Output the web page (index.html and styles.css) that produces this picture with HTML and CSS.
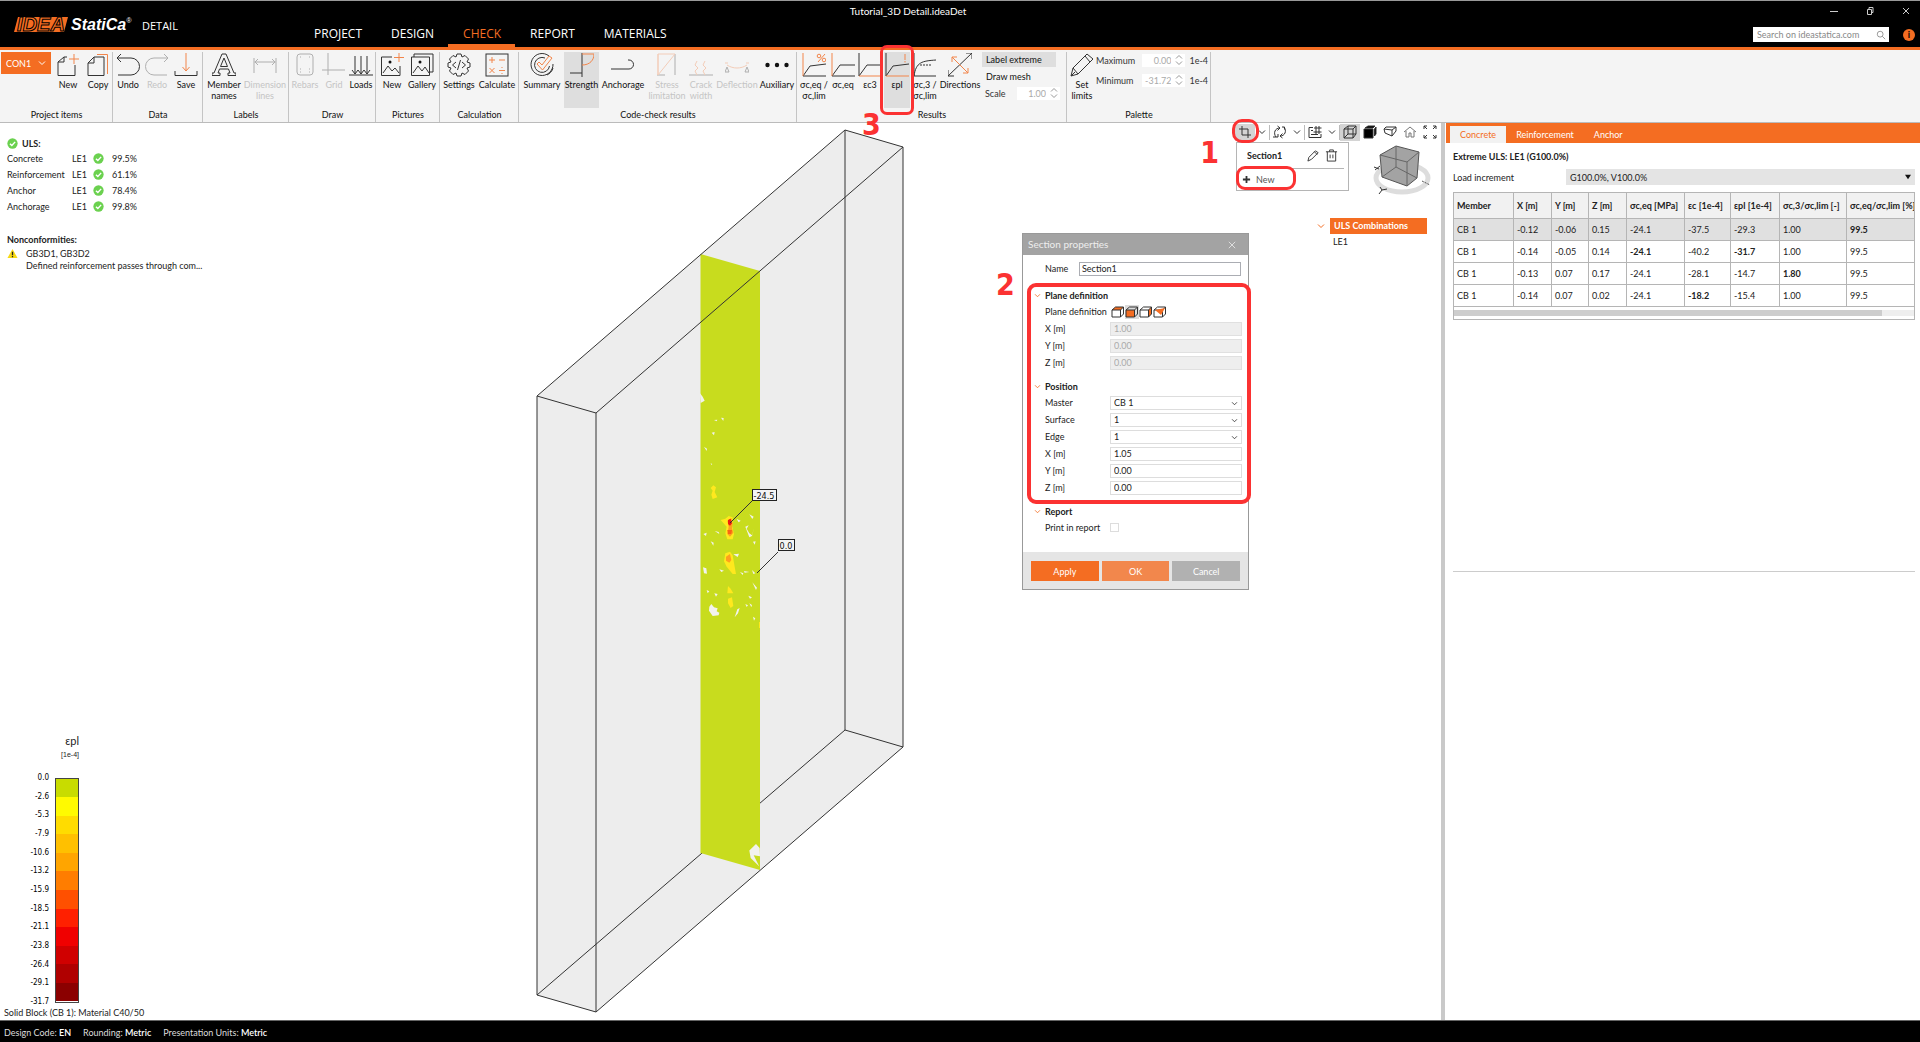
FILE: index.html
```html
<!DOCTYPE html>
<html lang="en">
<head>
<meta charset="utf-8">
<title>Tutorial_3D Detail.ideaDet</title>
<link rel="stylesheet" href="styles.css">
</head>
<body>
<svg class="defs" aria-hidden="true">
  <symbol id="chev" viewBox="0 0 8 6"><path d="M1 1.5 4 4.5 7 1.5"/></symbol>
  <symbol id="ok" viewBox="0 0 12 12"><circle cx="6" cy="6" r="5.6" fill="#6bd14f"/><path d="M3.2 6.2 5.3 8.2 8.9 4.2" fill="none" stroke="#fff" stroke-width="1.5"/></symbol>
  <symbol id="spin" viewBox="0 0 8 12"><path d="M1 4.5 4 1.5 7 4.5M1 7.5 4 10.5 7 7.5"/></symbol>
  <symbol id="boxlines" viewBox="0 0 14 12"><path d="M1 4 4.500 1H12.500L9.500 4ZM1 4V11H9.500V4M9.500 11 12.500 8V1"/></symbol>
</svg>

<header class="titlebar">
  <div class="brand">
    <span class="idea"><svg viewBox="0 0 56 17"><path d="M5 1H55L51 16H1Z"/></svg><b>IDEA</b></span>
    <span class="statica">StatiCa<sup>®</sup></span>
    <span class="product">DETAIL</span>
  </div>
  <nav class="menu">
    <a href="#project">PROJECT</a>
    <a href="#design">DESIGN</a>
    <a href="#check" class="on">CHECK</a>
    <a href="#report">REPORT</a>
    <a href="#materials">MATERIALS</a>
  </nav>
  <div class="doc">Tutorial_3D Detail.ideaDet</div>
  <div class="window">
    <div class="winbtns">
      <button aria-label="Minimize"><svg viewBox="0 0 10 10"><path d="M1 5.500H9"/></svg></button>
      <button aria-label="Restore"><svg viewBox="0 0 10 10"><path d="M2.500 3.500H6.500V8.500H2.500ZM4 3V1.500H8V6.500H7"/></svg></button>
      <button aria-label="Close"><svg viewBox="0 0 10 10"><path d="M2 2 8 8M8 2 2 8"/></svg></button>
    </div>
    <div class="searchrow">
      <label class="search"><input type="text" placeholder="Search on ideastatica.com" aria-label="Search"><svg viewBox="0 0 12 12"><circle cx="5" cy="5" r="3.500"/><path d="M7.500 7.500 11 11"/></svg></label>
      <button class="info" aria-label="Information">i</button>
    </div>
  </div>
</header>

<section class="ribbon">
  <div class="group g-project">
    <div class="tools">
      <button class="con">CON1 <svg viewBox="0 0 8 6"><use href="#chev"/></svg></button>
      <button class="tool w34"><svg viewBox="0 0 24 24"><path d="M8 4V9H2M8 4 2 9V22.500H19V12M8 4H11"/><path class="o" d="M18 1V11M13 6H23"/></svg>New</button>
      <button class="tool w26"><svg viewBox="0 0 24 24"><path d="M8 4H18V22.500H2V10L8 4V10H2"/><path class="o" d="M11 1.500H21.500V21"/></svg>Copy</button>
    </div>
    <h2>Project items</h2>
  </div>
  <div class="group g-data">
    <div class="tools">
      <button class="tool w28"><svg viewBox="0 0 24 24"><path d="M5 1 1 5 5 9M1 5H15A8.500 8.500 0 0 1 15 22H2"/></svg>Undo</button>
      <button class="tool w30" disabled><svg viewBox="0 0 24 24"><path d="M19 1 23 5 19 9M23 5H9A8.500 8.500 0 0 0 9 22H22"/></svg>Redo</button>
      <button class="tool w28"><svg viewBox="0 0 24 24"><path d="M1 18V22.500H23V18"/><path class="o" d="M12 0V18M8.500 14 12 18 15.500 14"/></svg>Save</button>
    </div>
    <h2>Data</h2>
  </div>
  <div class="group g-labels">
    <div class="tools">
      <button class="tool w40"><svg viewBox="0 0 24 24"><path d="M10 1H14L22 20H24V22.500H16V20H18L16.500 16H7.500L6 20H8V22.500H0V20H2ZM8.500 13.500H15.500L12 5Z"/></svg>Member names</button>
      <button class="tool w42" disabled><svg viewBox="0 0 24 24"><path d="M1 5V20M23 5V20M1.500 9H22.500M5 6 2 9 5 12M19 6 22 9 19 12"/></svg>Dimension lines</button>
    </div>
    <h2>Labels</h2>
  </div>
  <div class="group g-draw">
    <div class="tools">
      <button class="tool w30" disabled><svg viewBox="0 0 24 24"><rect x="4" y="1" width="16" height="21" rx="3"/><path d="M7 4H8M16 4H17M7 19H8M16 19H17M7 16H8M16 16H17"/></svg>Rebars</button>
      <button class="tool w28" disabled><svg viewBox="0 0 24 24"><path d="M6 0V22M0 17H23"/></svg>Grid</button>
      <button class="tool w26"><svg viewBox="0 0 24 24"><path d="M0 22H24M6 3V21M12 3V21M18 3V21M3 17 6 21 9 17M9 17 12 21 15 17M15 17 18 21 21 17"/></svg>Loads</button>
    </div>
    <h2>Draw</h2>
  </div>
  <div class="group g-pictures">
    <div class="tools">
      <button class="tool w30"><svg viewBox="0 0 24 24"><path d="M12 4H1.500V22.500H20V13M3 20 8 13 12 18 15 15 19 20"/><circle class="dot" cx="10" cy="9" r="1.500"/><path class="o" d="M19 0V9M14 4.500H24"/></svg>New</button>
      <button class="tool w30"><svg viewBox="0 0 24 24"><path d="M1.500 4H19.500V22.500H1.500ZM4 4V1H23V19H20M3 20 8 13 12 18 15 14 19 20"/><circle class="dot" cx="10" cy="9" r="1.500"/></svg>Gallery</button>
    </div>
    <h2>Pictures</h2>
  </div>
  <div class="group g-calc">
    <div class="tools">
      <button class="tool w36"><svg viewBox="0 0 24 24"><path d="M10 1H14L15 4 18 2.500 21.500 6 20 9 23 10V14L20 15 21.500 18 18 21.500 15 20 14 23H10L9 20 6 21.500 2.500 18 4 15 1 14V10L4 9 2.500 6 6 2.500 9 4ZM9 9 5.500 12 9 15M15 9 18.500 12 15 15M13.500 7 10.500 17"/></svg>Settings</button>
      <button class="tool w40"><svg viewBox="0 0 24 24"><rect x="1" y="1" width="22" height="22"/><path class="o" d="M4 7H10M7 4V10M14 7H20M4.500 15 9.500 20M9.500 15 4.500 20M14 17.500H20M17 14V15M17 20V21"/></svg>Calculate</button>
    </div>
    <h2>Calculation</h2>
  </div>
  <div class="group g-code">
    <div class="tools">
      <button class="tool w44"><svg viewBox="0 0 24 24"><path d="M19 3A11 11 0 1 0 23 11M15 5A7.500 7.500 0 1 0 19.500 13M23 15C22 19 19 21 17 22"/><path class="o" d="M7 11 9 9 12 12 19 3 22 5 12.500 17Z"/></svg>Summary</button>
      <button class="tool on w35"><svg viewBox="0 0 24 24"><path d="M12 0V24M0 20H12"/><path class="o" d="M12 1H24C24 7 20 12 12 12"/></svg>Strength</button>
      <button class="tool w48"><svg viewBox="0 0 24 24"><path d="M0 16H18A4 4 0 0 0 18 7H17"/></svg>Anchorage</button>
      <button class="tool w40" disabled><svg viewBox="0 0 24 24"><path d="M20 1V22M2 22H10"/><path class="o" d="M3 1H20L3 22ZM3 22V1"/></svg>Stress limitation</button>
      <button class="tool w28" disabled><svg viewBox="0 0 24 24"><path d="M0 22H24"/><path class="o" d="M8 22 6 18 9 15 6 12 8 8M16 22 14 18 17 15 14 12 16 8"/></svg>Crack width</button>
      <button class="tool w44" disabled><svg viewBox="0 0 24 24"><path d="M2 14 0 19H4ZM22 14 20 19H24Z"/><path class="o" d="M2 12C8 16 16 16 22 12M0 10H3M21 10H24"/></svg>Deflection</button>
      <button class="tool w36"><svg viewBox="0 0 24 24"><g class="dot"><circle cx="2.500" cy="12" r="2.200"/><circle cx="12" cy="12" r="2.200"/><circle cx="21.500" cy="12" r="2.200"/></g></svg>Auxiliary</button>
    </div>
    <h2>Code-check results</h2>
  </div>
  <div class="group g-results">
    <div class="tools">
      <button class="tool w32"><svg viewBox="0 0 24 24"><path d="M1 23 8 13 24 11M1 23H24"/><path class="o" d="M1 0V23M16 9 23 1"/><circle class="o" cx="17" cy="3" r="1.800"/><circle class="o" cx="22" cy="7" r="1.800"/></svg>σc,eq / σc,lim</button>
      <button class="tool w26"><svg viewBox="0 0 24 24"><path d="M1 23 9 12H24M1 23H24"/><path class="o" d="M1 0V23"/></svg>σc,eq</button>
      <button class="tool w28"><svg viewBox="0 0 24 24"><path d="M1 0V23L9 12H23"/><path class="o" d="M1 23H24"/></svg>εc3</button>
      <button class="tool on w26"><svg viewBox="0 0 24 24"><path d="M1 0V23L8 13 24 11"/><path class="o" d="M1 23H24M20 1V7M20 8V9.500"/></svg>εpl</button>
      <button class="tool w30"><svg viewBox="0 0 24 24"><path d="M1 0V23H23M1 23C3 9 9 8 23 7"/><path stroke-dasharray="2 1" d="M7 12H18"/></svg>σc,3 / σc,lim</button>
      <button class="tool w40"><svg viewBox="0 0 24 24"><path d="M0 23 24 0M18 0H24V6M0 17V23H6"/><path class="o" d="M4 4 20 20M4 9V4H9M20 15V20H15"/></svg>Directions</button>
      <div class="options">
        <button class="opt on">Label extreme</button>
        <button class="opt">Draw mesh</button>
        <label class="num">Scale <span><input type="text" value="1.00" disabled><svg viewBox="0 0 8 12"><use href="#spin"/></svg></span></label>
      </div>
    </div>
    <h2>Results</h2>
  </div>
  <div class="group g-palette">
    <div class="tools">
      <button class="tool w28"><svg viewBox="0 0 24 24"><path d="M1 23 3 15 17 1 23 6 8 21ZM3 15 8 21M15 3 20 9M1 23 5 19"/></svg>Set limits</button>
      <div class="limits">
        <label class="num">Maximum <span><input type="text" value="0.00" disabled><svg viewBox="0 0 8 12"><use href="#spin"/></svg></span><i>1e-4</i></label>
        <label class="num">Minimum <span><input type="text" value="-31.72" disabled><svg viewBox="0 0 8 12"><use href="#spin"/></svg></span><i>1e-4</i></label>
      </div>
    </div>
    <h2>Palette</h2>
  </div>
  <div class="mark mark-epl"></div>
  <div class="step step3">3</div>
</section>

<main class="work">
  <section class="canvas">
    <svg class="model" viewBox="535 123 372 897">
      <path fill="#ededed" d="M537 396 845 130 903 147V747L596 1012 537 995Z"/>
      <g class="edge">
        <path d="M537 995 845 730 903 747M845 730V130"/>
      </g>
      <path fill="#c8dc1e" d="M700.500 254 760 271V870L700.500 853Z"/>
      <g transform="translate(680 370) scale(.3333)">
        <g fill="#f2f2ee">
          <path d="M60 70 68 80 74 92 62 99ZM102 150 112 149 110 154ZM123 143 131 144 130 153ZM95 188 104 186 102 196ZM72 230 81 236 80 243ZM92 280 97 282 94 285ZM170 447 182 452 176 457ZM208 433 221 440 217 447ZM196 470 206 466 200 476 208 490 216 496 222 474 216 498 208 502ZM104 483 116 486 118 492ZM70 492 80 488 78 498ZM92 514 101 518 100 527ZM219 515 227 514 224 524ZM160 553 177 551 173 561ZM69 592 79 595 81 611 72 610ZM118 598 132 602 124 606ZM180 606 190 610 188 615ZM192 603 208 606 194 608ZM216 600 226 610 220 612ZM217 637 231 653 228 660ZM80 660 88 664 83 670ZM103 670 113 672 108 680ZM205 677 216 682 210 686ZM88 710 94 702 102 712 113 715 110 724 118 728 116 736 98 738 87 722ZM196 702 204 706 200 711ZM208 700 216 705 214 712ZM172 718 179 714 174 730 164 742ZM219 740 226 745 222 752Z"/>
          <path d="M208 1442 228 1422 239 1434 240 1459 221 1456 238 1490 212 1464Z"/>
        </g>
        <g fill="#ffe81e">
          <path d="M92 354 100 346 108 352 104 366 112 382 98 387 94 374 98 362ZM122 450 136 446 146 438 158 442 157 470 162 492 158 508 142 508 136 490 140 470ZM136 550 150 545 158 556 164 590 168 612 158 612 140 590 132 574ZM144 648 152 656 160 670 142 670ZM144 686 156 682 160 708 152 714 144 700Z"/>
        </g>
        <path fill="#ffa01e" d="M142 452 154 444 158 462 156 474 160 488 150 500 142 492 146 470ZM138 560 150 552 154 570 148 578 138 572Z"/>
        <path fill="#ee1c10" d="M144 450 152 446 156 460 150 467 144 462Z"/>
        <path fill="#f96414" d="M142 480 156 480 154 492 144 492Z"/>
        <path fill="#ffe81e" d="M237 756H240V774H237Z"/>
      </g>
      <g class="edge">
        <path d="M537 396 845 130 903 147 596 413ZM537 396V995L596 1012V413M596 1012 903 747V147"/>
        <path d="M730 523 752 501M757 573 778 552"/>
      </g>
      <g class="tag">
        <rect x="752.500" y="489.500" width="24" height="11"/><text x="764" y="499">-24.5</text>
        <rect x="778.500" y="539.500" width="16" height="11"/><text x="786" y="549">0.0</text>
      </g>
    </svg>

    <div class="left">
      <table class="uls">
        <caption><svg viewBox="0 0 12 12"><use href="#ok"/></svg>ULS:</caption>
        <tr><td>Concrete</td><td>LE1</td><td><svg viewBox="0 0 12 12"><use href="#ok"/></svg></td><td>99.5%</td></tr>
        <tr><td>Reinforcement</td><td>LE1</td><td><svg viewBox="0 0 12 12"><use href="#ok"/></svg></td><td>61.1%</td></tr>
        <tr><td>Anchor</td><td>LE1</td><td><svg viewBox="0 0 12 12"><use href="#ok"/></svg></td><td>78.4%</td></tr>
        <tr><td>Anchorage</td><td>LE1</td><td><svg viewBox="0 0 12 12"><use href="#ok"/></svg></td><td>99.8%</td></tr>
      </table>
      <div class="non">
        <h3>Nonconformities:</h3>
        <div class="warn"><svg viewBox="0 0 12 12"><path fill="#f7d914" d="M6 1 11.500 11H.5Z"/><path stroke="#222" stroke-width="1.400" d="M6 4V7.500M6 8.500V10"/></svg><p>GB3D1, GB3D2<br>Defined reinforcement passes through com...</p></div>
      </div>
      <div class="legend">
        <div class="unit"><span>εpl</span><small>[1e-4]</small></div>
        <div class="scale">
          <ol><li>0.0</li><li>-2.6</li><li>-5.3</li><li>-7.9</li><li>-10.6</li><li>-13.2</li><li>-15.9</li><li>-18.5</li><li>-21.1</li><li>-23.8</li><li>-26.4</li><li>-29.1</li><li>-31.7</li></ol>
          <div class="bar"><i class="c1"></i><i class="c2"></i><i class="c3"></i><i class="c4"></i><i class="c5"></i><i class="c6"></i><i class="c7"></i><i class="c8"></i><i class="c9"></i><i class="c10"></i><i class="c11"></i><i class="c12"></i></div>
        </div>
      </div>
      <p class="solid">Solid Block (CB 1): Material C40/50</p>
    </div>

    <div class="right">
      <div class="viewbar">
        <button class="on" aria-label="Section"><svg viewBox="0 0 14 14"><path d="M4 1V10H13M1 4H10V13"/></svg></button><svg class="cv" viewBox="0 0 8 6"><use href="#chev"/></svg><hr>
        <button aria-label="Rotate"><svg viewBox="0 0 14 14"><path d="M3 12C0 8 2 3 7 3M4.500 1 7 3 4.500 5.500M11 2C14 6 12 11 7 11M9.500 8.500 7 11 9.500 13M9 2H11.500V4.500M0 12H5V9"/></svg></button><svg class="cv" viewBox="0 0 8 6"><use href="#chev"/></svg><hr>
        <button aria-label="Labels"><svg viewBox="0 0 14 14"><path d="M5 2.500H1V12.500H13V9M3 5.500H5M3 9.500H10M5.500 7H13.500M8 1V9M11 1V9M6 3H13.500"/></svg></button><svg class="cv" viewBox="0 0 8 6"><use href="#chev"/></svg><hr>
        <button class="on" aria-label="Wireframe"><svg viewBox="0 0 14 14"><path d="M1 4 5 1H13L10 4ZM1 4V13H10V4M10 13 13 9V1M5 1V9L1 13M5 9H13"/></svg></button>
        <button aria-label="Solid"><svg viewBox="0 0 14 14"><path fill="#000" d="M1 4H10V13H1Z"/><path fill="#000" d="M2 3 5 1H12L10 3ZM11.500 4 13 2V9L11.500 11Z"/></svg></button>
        <button aria-label="Perspective"><svg viewBox="0 0 14 14"><path d="M1 4 3 2H13L9 5ZM1 4 2 8 9 11V5M9 11 13 6V2"/></svg></button>
        <button aria-label="Home"><svg viewBox="0 0 14 14"><path stroke="#777" d="M1 7 7 2 13 7M3 6V12H6V8H8V12H11V6"/></svg></button>
        <button aria-label="Fit"><svg viewBox="0 0 14 14"><path d="M1 4V1H4M1 1 4 4M10 1H13V4M13 1 10 4M1 10V13H4M1 13 4 10M10 13H13V10M13 13 10 10"/></svg></button>
      </div>
      <svg class="viewcube" viewBox="0 0 60 52">
        <ellipse cx="31" cy="34" rx="26" ry="14" fill="none" stroke="#ddd" stroke-width="5"/>
        <path fill="#a3a3a3" stroke="#555" d="M9 11 25 2 48 8 46 34 36 42 11 33Z"/>
        <path fill="none" stroke="#666" d="M9 11 36 18 48 8M36 18V42M25 2V23L11 33M25 23 46 34"/>
        <path fill="none" stroke="#333" d="M4 26 9 22M3 23 8 25M8 50 11 46 16 45M11 46 9 43"/><path stroke="#555" stroke-dasharray="2 1" d="M51 37 59 41"/>
      </svg>
      <ul class="tree">
        <li><svg viewBox="0 0 8 6"><use href="#chev"/></svg><b>ULS Combinations</b></li>
        <li class="leaf">LE1</li>
      </ul>
    </div>

    <div class="popup">
      <div class="sec"><b>Section1</b>
        <button aria-label="Edit"><svg viewBox="0 0 14 14"><path d="M1 13 2 9 9 2 12 4 5 11ZM8 3 11 6"/></svg></button>
        <button aria-label="Delete"><svg viewBox="0 0 14 14"><path d="M1 3H13M5 3V1H9V3M2.500 3V13H11.500V3M5.500 6V10M8.500 6V10"/></svg></button></div>
      <button class="new"><svg viewBox="0 0 10 10"><path stroke-width="2" d="M5 1V9M1 5H9"/></svg>New</button>
    </div>
    <div class="mark mark-crop"></div>
    <div class="mark mark-new"></div>
    <div class="step step1">1</div>

    <form class="dialog">
      <header><span>Section properties</span><button type="button" aria-label="Close"><svg viewBox="0 0 10 10"><path d="M1 1 9 9M9 1 1 9"/></svg></button></header>
      <div class="name"><label for="nm">Name</label><input id="nm" type="text" value="Section1"></div>
      <fieldset>
        <legend><svg viewBox="0 0 8 6"><use href="#chev"/></svg>Plane definition</legend>
        <div class="row"><span>Plane definition</span><span class="planes">
          <button type="button" aria-label="XY"><svg viewBox="0 0 14 12"><path fill="#f46d22" stroke="none" d="M1 4 4.500 1H12.500L9.500 4Z"/><use href="#boxlines"/></svg></button>
          <button type="button" class="on" aria-label="XZ"><svg viewBox="0 0 14 12"><path fill="#f46d22" stroke="none" d="M1 4H9.500V11H1Z"/><use href="#boxlines"/></svg></button>
          <button type="button" aria-label="YZ"><svg viewBox="0 0 14 12"><path fill="#f46d22" stroke="none" d="M9.500 4 12.500 1V8L9.500 11Z"/><use href="#boxlines"/></svg></button>
          <button type="button" aria-label="General"><svg viewBox="0 0 14 12"><use href="#boxlines"/><path fill="#f46d22" stroke="none" d="M2 4 12 2 8 9Z"/></svg></button></span></div>
        <div class="row"><label for="px">X [m]</label><input id="px" type="text" value="1.00" disabled></div>
        <div class="row"><label for="py">Y [m]</label><input id="py" type="text" value="0.00" disabled></div>
        <div class="row"><label for="pz">Z [m]</label><input id="pz" type="text" value="0.00" disabled></div>
      </fieldset>
      <fieldset>
        <legend><svg viewBox="0 0 8 6"><use href="#chev"/></svg>Position</legend>
        <div class="row"><label for="ms">Master</label><span class="sel"><select id="ms"><option>CB 1</option></select><svg viewBox="0 0 8 6"><use href="#chev"/></svg></span></div>
        <div class="row"><label for="sf">Surface</label><span class="sel"><select id="sf"><option>1</option></select><svg viewBox="0 0 8 6"><use href="#chev"/></svg></span></div>
        <div class="row"><label for="ed">Edge</label><span class="sel"><select id="ed"><option>1</option></select><svg viewBox="0 0 8 6"><use href="#chev"/></svg></span></div>
        <div class="row"><label for="x">X [m]</label><input id="x" type="text" value="1.05"></div>
        <div class="row"><label for="y">Y [m]</label><input id="y" type="text" value="0.00"></div>
        <div class="row"><label for="z">Z [m]</label><input id="z" type="text" value="0.00"></div>
      </fieldset>
      <fieldset>
        <legend><svg viewBox="0 0 8 6"><use href="#chev"/></svg>Report</legend>
        <div class="row"><label for="pr">Print in report</label><input id="pr" type="checkbox"></div>
      </fieldset>
      <footer><button type="button" class="apply">Apply</button><button type="button" class="okb">OK</button><button type="button" class="cancel">Cancel</button></footer>
      <div class="mark mark-form"></div>
      <div class="step step2">2</div>
    </form>
  </section>

  <aside class="panel">
    <nav class="tabs"><a href="#concrete" class="on">Concrete</a><a href="#reinforcement">Reinforcement</a><a href="#anchor">Anchor</a></nav>
    <div class="results">
      <h3>Extreme ULS: LE1 (G100.0%)</h3>
      <div class="inc"><label for="inc">Load increment</label><span class="sel"><select id="inc"><option>G100.0%, V100.0%</option></select><svg viewBox="0 0 8 6"><path d="M0 0H8L4 6Z"/></svg></span></div>
      <div class="grid">
        <table>
          <colgroup><col class="k60"><col class="k38"><col class="k37"><col class="k38"><col class="k58"><col class="k46"><col class="k49"><col class="k67"><col class="k84"></colgroup>
          <thead><tr><th>Member</th><th>X [m]</th><th>Y [m]</th><th>Z [m]</th><th>σc,eq [MPa]</th><th>εc [1e-4]</th><th>εpl [1e-4]</th><th>σc,3/σc,lim [-]</th><th>σc,eq/σc,lim [%]</th></tr></thead>
          <tbody>
            <tr class="hl"><td>CB 1</td><td>-0.12</td><td>-0.06</td><td>0.15</td><td>-24.1</td><td>-37.5</td><td>-29.3</td><td>1.00</td><td><b>99.5</b></td></tr>
            <tr><td>CB 1</td><td>-0.14</td><td>-0.05</td><td>0.14</td><td><b>-24.1</b></td><td>-40.2</td><td><b>-31.7</b></td><td>1.00</td><td>99.5</td></tr>
            <tr><td>CB 1</td><td>-0.13</td><td>0.07</td><td>0.17</td><td>-24.1</td><td>-28.1</td><td>-14.7</td><td><b>1.80</b></td><td>99.5</td></tr>
            <tr><td>CB 1</td><td>-0.14</td><td>0.07</td><td>0.02</td><td>-24.1</td><td><b>-18.2</b></td><td>-15.4</td><td>1.00</td><td>99.5</td></tr>
          </tbody>
        </table>
        <div class="hscroll"><i></i></div>
      </div>
    </div>
    <div class="lower"></div>
  </aside>
</main>

<footer class="status"><span>Design Code: <b>EN</b></span><span>Rounding: <b>Metric</b></span><span>Presentation Units: <b>Metric</b></span></footer>
</body>
</html>
```
FILE: styles.css
```css
* { box-sizing: border-box; }
html, body { height: 100%; margin: 0; }
body {
  display: flex; flex-direction: column; overflow: hidden;
  font: 9px/11px Lato, "Open Sans", "Noto Sans", sans-serif;
  color: #222; background: #fff;
}
button, input, select { font: inherit; color: inherit; margin: 0; padding: 0; border: 0; background: none; border-radius: 0; min-width: 0; }
h2, h3, p, ol, ul, fieldset, legend { margin: 0; padding: 0; border: 0; font-size: inherit; list-style: none; }
a { text-decoration: none; color: inherit; }
svg { display: block; fill: none; stroke: #333; flex: none; }
.defs { display: none; }

/* title bar */
.titlebar {
  position: relative; display: flex; justify-content: space-between; height: 50px; flex: none;
  background: #000; color: #fff; border-top: 1px solid #999; border-bottom: 3px solid #f46d22;
}
.brand { display: flex; width: 299px; padding: 15px 0 0 13px; align-items: flex-start; }
.idea { position: relative; width: 56px; height: 17px; margin-right: 2px; text-align: center; font: italic bold 20px/17px "Liberation Sans", Arial, sans-serif; color: #f46d22; -webkit-text-stroke: 1px #000; }
.idea svg { position: absolute; inset: 0; stroke: none; fill: #f46d22; }
.idea b { position: relative; }
.statica { font: italic bold 16px/17px "Liberation Sans", Arial, sans-serif; width: 71px; }
.statica sup { font-size: 7px; line-height: 7px; vertical-align: 7px; font-weight: normal; }
.product { font: 11px/20px "Open Sans", "Noto Sans", sans-serif; }
.menu { display: flex; flex: 1; font: 12px/20px "Open Sans", "Noto Sans", sans-serif; }
.menu a { padding: 23px 14px 0 15px; border-bottom: 3px solid transparent; }
.menu .on { color: #f46d22; border-color: #f46d22; }
.doc { position: absolute; left: 0; right: 104px; top: 5px; text-align: center; pointer-events: none; font-size: 10px; }
.window { width: 180px; padding-right: 5px; }
.winbtns { display: flex; justify-content: flex-end; gap: 26px; padding: 5px 4px 0 0; }
.winbtns svg { width: 10px; height: 10px; stroke: #ccc; }
.searchrow { display: flex; justify-content: flex-end; gap: 14px; margin-top: 11px; align-items: center; }
.search { display: flex; width: 136px; height: 15px; background: #fff; align-items: center; padding: 0 3px 0 4px; }
.search input { flex: 1; outline: 0; }
.search input::placeholder { color: #888; opacity: 1; }
.search svg { width: 10px; height: 10px; stroke: #888; }
.info { width: 12px; height: 12px; border-radius: 50%; background: #f46d22; font-weight: bold; line-height: 12px; color: #000; }
.winbtns button { width: 10px; }

/* ribbon */
.ribbon { position: relative; display: flex; height: 73px; flex: none; background: #f4f4f4; border-bottom: 1px solid #bbb; color: #111; }
.group { display: flex; flex-direction: column; padding: 2px 1px 0; background: linear-gradient(#c4c4c4, #c4c4c4) right bottom / 1px 70px no-repeat; }
.g-project { width: 113px; } .g-data { width: 90px; } .g-labels { width: 86px; }
.g-draw { width: 87px; } .g-pictures { width: 64px; } .g-calc { width: 79px; }
.g-code { width: 278px; } .g-results { width: 270px; } .g-palette { width: 144px; }
.group h2 { font-weight: normal; text-align: center; margin-top: 1px; }
.tools { display: flex; height: 56px; }
.tool { display: flex; flex: none; flex-direction: column; align-items: center; padding-top: 1px; gap: 2px; text-align: center; }
.tool svg { width: 24px; height: 24px; }
.tool svg .o { stroke: #f2854a; }
.tool.on { background: #dedede; }
.tool:disabled { color: #c4c4c4; }
.tool:disabled svg { opacity: .35; }
.dot, .tool svg .dot { fill: #111; stroke: none; }
.w26 { width: 26px; } .w28 { width: 28px; } .w30 { width: 30px; } .w32 { width: 32px; } .w34 { width: 34px; }
.w35 { width: 35px; } .w36 { width: 36px; } .w40 { width: 40px; } .w42 { width: 42px; } .w44 { width: 44px; } .w48 { width: 48px; }
.con { display: flex; width: 50px; height: 22px; background: #f46d22; color: #fff; align-items: center; justify-content: space-between; padding: 0 5px; }
.con svg { width: 8px; height: 6px; stroke: #fff; }
.options { width: 80px; padding-left: 2px; display: flex; flex-direction: column; align-items: flex-start; gap: 2px; }
.opt { height: 15px; width: 74px; text-align: left; padding-left: 4px; }
.opt.on { background: #dedede; }
.num { display: flex; align-items: center; height: 14px; color: #333; padding-left: 3px; width: 100%; }
.num span { display: flex; flex: none; margin-left: auto; width: 43px; height: 13px; background: #fff; align-items: center; gap: 4px; padding-right: 2px; color: #aaa; }
.num input { flex: 1; text-align: right; }
.num svg { width: 8px; height: 12px; stroke: #999; }
.num i { font-style: normal; margin-left: 4px; }
.limits { display: flex; flex-direction: column; flex: 1; gap: 6px; padding: 1px 2px 0 0; }
.limits .num { padding-left: 0; }

/* red callouts */
.mark { position: absolute; border: 3px solid #fb3232; pointer-events: none; }
.step { position: absolute; font: bold 30px/30px "DejaVu Sans Condensed", "DejaVu Sans", sans-serif; color: #fb3232; }
.mark-epl { left: 880px; top: -5px; width: 34px; height: 70px; border-radius: 7px; }
.step3 { left: 862px; top: 60px; z-index: 2; }
.mark-crop { right: 182px; top: -4px; width: 27px; height: 24px; border-radius: 10px; }
.mark-new { right: 145px; top: 43px; width: 60px; height: 24px; border-radius: 9px; }
.step1 { right: 222px; top: 15px; }
.mark-form { left: 4px; top: 49px; width: 224px; height: 221px; border-radius: 9px; border-width: 4px; }
.step2 { left: -27px; top: 36px; }

/* workspace */
.work { display: flex; flex: 1; min-height: 0; }
.canvas { position: relative; display: grid; grid-template: 100% / 1fr; flex: 1; min-width: 0; }
.canvas > .model, .left, .right { grid-area: 1 / 1; }
.model { height: 100%; justify-self: center; stroke: none; }
.edge { stroke: #333; stroke-width: 1; }
.tag rect { fill: #f4f4f4; stroke: #222; }
.tag text { font: 9px "DejaVu Sans Condensed", "DejaVu Sans", sans-serif; fill: #111; stroke: none; text-anchor: middle; }
.left { justify-self: start; display: flex; flex-direction: column; position: relative; padding: 15px 0 2px; }
.uls { border-collapse: collapse; margin-left: 7px; align-self: flex-start; }
.uls caption { text-align: left; font-weight: bold; height: 12px; white-space: nowrap; }
.uls caption svg { display: inline-block; vertical-align: -2px; margin-right: 4px; }
.uls svg { width: 11px; height: 11px; stroke: none; }
.uls td { padding: 0; height: 16px; }
.uls td:nth-child(1) { width: 65px; } .uls td:nth-child(2) { width: 21px; } .uls td:nth-child(3) { width: 19px; }
.non { margin: 20px 0 0 7px; }
.warn { display: flex; gap: 8px; margin-top: 3px; line-height: 12px; }
.warn svg { width: 11px; height: 11px; stroke: none; }
.legend { margin-top: auto; width: 79px; }
.unit { display: flex; flex-direction: column; align-items: flex-end; font-size: 11px; gap: 4px; }
.unit small { font: 7px/10px "Liberation Sans", Arial, sans-serif; }
.scale { display: flex; justify-content: flex-end; align-items: center; gap: 6px; margin-top: 13px; font: 8px/10px "DejaVu Sans Condensed", "DejaVu Sans", sans-serif; color: #000; }
.scale ol { display: flex; flex-direction: column; justify-content: space-between; height: 234px; text-align: right; }
.bar { display: flex; flex-direction: column; width: 24px; height: 225px; border: 1px solid #444; }
.bar i { flex: 1; }
.c1 { background: #c8dc00; } .c2 { background: #fffa00; } .c3 { background: #ffdc00; } .c4 { background: #ffc000; }
.c5 { background: #ffa500; } .c6 { background: #ff7d00; } .c7 { background: #ff5000; } .c8 { background: #ff2000; }
.c9 { background: #f00000; } .c10 { background: #d00000; } .c11 { background: #b00000; } .c12 { background: #8b0000; }
.solid { padding-left: 4px; }

.right { justify-self: end; width: 210px; }
.viewbar { display: flex; align-items: center; height: 18px; justify-content: flex-end; padding-right: 1px; }
.viewbar button { width: 20px; height: 17px; display: grid; place-items: center; }
.viewbar button.on { background: #d4d4d4; }
.viewbar svg { width: 14px; height: 14px; }
.viewbar .cv { width: 8px; height: 6px; margin: 0 3px; }
.viewbar hr { width: 1px; height: 15px; border: 0; margin: 0; background: #bbb; }
.viewcube { width: 60px; height: 52px; margin: 3px 10px 0 auto; }
.tree { margin: 22px 14px 0 auto; width: 110px; }
.tree li { display: flex; align-items: center; gap: 5px; line-height: 16px; }
.tree svg { width: 8px; height: 6px; stroke: #f46d22; }
.tree b { flex: 1; background: #f46d22; color: #fff; padding-left: 4px; }
.tree .leaf { padding-left: 16px; }

.popup { position: absolute; right: 92px; top: 19px; width: 113px; height: 49px; background: #fff; border: 1px solid #b5b5b5; padding: 0 4px; }
.sec { display: flex; align-items: center; height: 26px; border-bottom: 1px solid #b5b5b5; gap: 5px; padding: 0 6px; }
.sec b { flex: 1; }
.sec svg { width: 13px; height: 13px; }
.new { display: flex; align-items: center; gap: 5px; height: 20px; padding-left: 1px; color: #555; }
.new svg { width: 9px; height: 9px; }

/* section dialog */
.dialog { position: absolute; right: 192px; top: 110px; width: 227px; height: 357px; background: #fff; border: 1px solid #999; display: flex; flex-direction: column; }
.dialog header { display: flex; height: 21px; background: #a3a3a3; color: #eee; align-items: center; justify-content: space-between; padding: 0 12px 0 5px; font-size: 10px; }
.dialog header svg { width: 8px; height: 8px; stroke: #eee; }
.name { display: flex; align-items: center; height: 15px; margin: 6px 7px 11px 22px; }
.name label { width: 34px; }
.name input { flex: 1; height: 14px; border: 1px solid #abadb3; padding-left: 2px; }
fieldset { padding: 0 6px 7px 11px; min-width: 0; }
legend { display: flex; align-items: center; height: 16px; font-weight: bold; gap: 4px; }
legend svg { width: 7px; height: 5px; stroke: #f46d22; }
.row { display: flex; align-items: center; height: 17px; padding-left: 11px; }
.row > :first-child { width: 65px; white-space: nowrap; }
.row input[type=text], .row .sel { flex: 1; height: 14px; border: 1px solid #ddd; padding-left: 3px; }
.row input:disabled { background: #eee; color: #aaa; border-color: #e0e0e0; }
.row input[type=checkbox] { appearance: none; width: 9px; height: 9px; border: 1px solid #ddd; }
.planes { display: flex; margin-left: 1px; }
.planes button { width: 14px; height: 14px; display: grid; place-items: center; }
.planes .on { background: #dcdcdc; }
.planes svg { width: 14px; height: 12px; }
.sel { position: relative; display: flex; }
.sel select { flex: 1; appearance: none; outline: 0; }
.sel svg { position: absolute; right: 3px; top: 4px; width: 7px; height: 5px; pointer-events: none; }
.dialog footer { display: flex; gap: 3px; margin-top: auto; height: 37px; background: #e5e5e5; padding: 9px 8px; align-items: flex-start; }
.dialog footer button { flex: 1; height: 20px; color: #fff; }
.apply { background: #f46d22; } .okb { background: #f2874c; } .cancel { background: #b1b1b1; }

/* result panel */
.panel { width: 479px; flex: none; border-left: 4px solid #c9c9c9; display: flex; flex-direction: column; }
.tabs { display: flex; height: 20px; background: #f46d22; color: #fff; padding: 3px 0 0 4px; line-height: 17px; margin-left: 1px; }
.tabs a { padding: 0 10px; }
.tabs .on { background: #f2f2f2; color: #f46d22; }
.results { padding: 8px 5px 0 8px; height: 428px; }
.inc { display: flex; align-items: center; margin: 7px 0; }
.inc label { width: 113px; }
.inc .sel { flex: 1; height: 16px; background: #e4e4e4; padding-left: 4px; }
.inc .sel svg { top: 5px; right: 4px; width: 6px; height: 6px; fill: #111; stroke: none; }
.grid { border: 1px solid #b5b5b5; border-top-width: 0; overflow: hidden; }
.grid table { border-collapse: collapse; table-layout: fixed; width: 477px; margin-left: -1px; }
.grid th, .grid td { border: 1px solid #b5b5b5; padding: 0 3px; height: 22px; text-align: left; white-space: nowrap; overflow: hidden; }
.grid th { height: 26px; background: #f1f1f1; }
.hl { background: #e0e0e0; }
.k60 { width: 60px; } .k38 { width: 38px; } .k37 { width: 37px; } .k58 { width: 58px; } .k46 { width: 46px; }
.k49 { width: 49px; } .k67 { width: 67px; } .k84 { width: 84px; }
.hscroll { margin-top: 3px; height: 9px; background: linear-gradient(#eee, #eee) top / 100% 6px no-repeat; }
.hscroll i { display: block; width: 93%; height: 6px; background: #cdcdcd; }
.lower { flex: 1; margin: 0 5px 0 8px; border-top: 1px solid #ccc; }

.status { display: flex; gap: 12px; height: 22px; flex: none; background: #000; color: #ddd; border-top: 1px solid #666; line-height: 23px; padding-left: 4px; }
.status b { font-weight: 600; color: #fff; }
```
